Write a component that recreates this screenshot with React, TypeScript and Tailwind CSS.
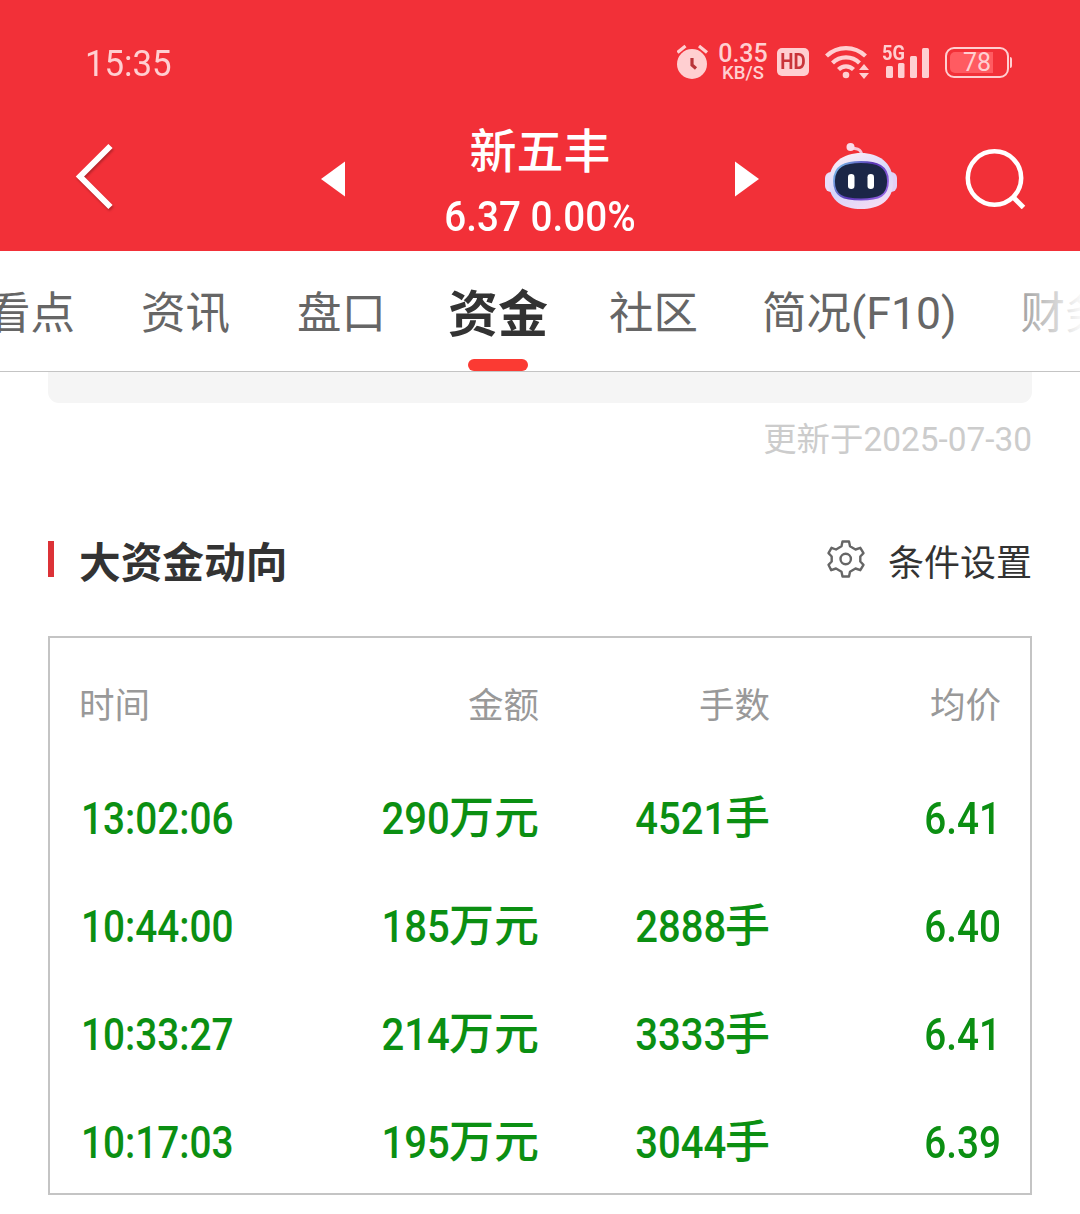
import React from 'react';
import clsx from 'clsx';

const trades = [
  { time: '13:02:06', amount: '290', lots: '4521', price: '6.41' },
  { time: '10:44:00', amount: '185', lots: '2888', price: '6.40' },
  { time: '10:33:27', amount: '214', lots: '3333', price: '6.41' },
  { time: '10:17:03', amount: '195', lots: '3044', price: '6.39' },
];

const tabs = ['看点', '资讯', '盘口', '资金', '社区', '简况(F10)', '财务'];

function StatusIcons() {
  return (
    <div className="flex items-center pb-[2px] text-[#ffcfd1]">
      <svg width="32" height="36" viewBox="0 0 32 36" fill="none">
        <circle cx="15" cy="20" r="15" fill="currentColor" />
        <path d="M0.500 8.500l8-6.500M30 8.500l-8-6.500" stroke="currentColor" strokeWidth="3.200" />
        <path d="M15 14v7l4 3.500" stroke="#b8343a" strokeWidth="3.200" />
      </svg>
      <div className="ml-[9px] flex w-[50px] flex-col items-center pt-[3px] font-medium">
        <span className="text-[25px] leading-[19px]">0.35</span>
        <span className="text-[18.500px] leading-[20px]">KB/S</span>
      </div>
      <div className="ml-[9px] flex h-[28px] w-[32px] items-center justify-center rounded-[5px] bg-[#ffcfd1]">
        <span className="scale-x-[0.85] text-[22px] leading-none font-bold text-[#c9343a]">HD</span>
      </div>
      <svg className="ml-[16px]" width="46" height="36" viewBox="0 0 46 36" fill="none">
        <g stroke="currentColor" strokeWidth="4.200">
          <path d="M1.500 12a28 28 0 0 1 39 0" />
          <path d="M7.500 19a19 19 0 0 1 27 0" />
          <path d="M13.500 25.500a10.500 10.500 0 0 1 15 0" />
        </g>
        <circle cx="21" cy="31" r="3.300" fill="currentColor" />
        <path d="M34 26l5-6 5 6zM34 29l5 6 5-6z" fill="currentColor" />
      </svg>
      <div className="relative ml-[11px] h-[36px] w-[47px]">
        <span className="absolute -top-[1px] left-0 origin-left scale-x-[0.87] text-[21px] leading-none font-bold">5G</span>
        <svg width="47" height="36" viewBox="0 0 47 36" fill="currentColor">
          <rect x="4" y="22" width="7" height="12" rx="1.500" />
          <rect x="16" y="19" width="6.500" height="15" rx="1.500" />
          <rect x="28" y="12" width="7" height="22" rx="1.500" />
          <rect x="40" y="4" width="7" height="30" rx="1.500" />
        </svg>
      </div>
      <div className="ml-[16px] flex h-[31px] w-[64px] rounded-[9px] border-2 border-[#ffcfd1] p-[3px]">
        <div className="flex h-full w-[43px] items-center justify-end rounded-l-[5px] bg-[#ff5b61] pr-[2px] text-[25px] leading-none">
          78
        </div>
      </div>
      <div className="ml-[1px] h-[11px] w-[2px] rounded-r bg-[#ffcfd1]" />
    </div>
  );
}

function Robot() {
  return (
    <svg width="74" height="68" viewBox="0 0 74 68" fill="none">
      <defs>
        <linearGradient id="shell" x1="20" y1="10" x2="46" y2="68" gradientUnits="userSpaceOnUse">
          <stop stopColor="#fdeef6" />
          <stop offset="0.55" stopColor="#d5d6fb" />
          <stop offset="1" stopColor="#f5dcf3" />
        </linearGradient>
        <linearGradient id="rim" x1="12" y1="20" x2="62" y2="56" gradientUnits="userSpaceOnUse">
          <stop stopColor="#79c5ee" />
          <stop offset="0.5" stopColor="#5a35b5" />
          <stop offset="1" stopColor="#9a6ae8" />
        </linearGradient>
      </defs>
      <path d="M27 5.500c5 2 10 0 11 8.500" stroke="#f8c6d8" strokeWidth="3" />
      <circle cx="26.500" cy="5" r="4" fill="#f9dcea" />
      <rect x="1" y="30" width="12" height="20" rx="6" fill="#e9defa" />
      <rect x="61" y="30" width="12" height="20" rx="6" fill="#e3cff5" />
      <path d="M37 11C54 11 69 20 69 40S54 67 37 67 5 60 5 40 20 11 37 11z" fill="url(#shell)" />
      <path
        d="M37 20c16 0 27 4 27 19s-9 18.500-27 18.500S10 54 10 39s11-19 27-19z"
        fill="#1b2647"
        stroke="url(#rim)"
        strokeWidth="1.800"
      />
      <rect x="24" y="32" width="6.500" height="15" rx="3.200" fill="#fff" />
      <rect x="43.500" y="32" width="6.500" height="15" rx="3.200" fill="#fff" />
    </svg>
  );
}

function Header() {
  return (
    <header className="h-[251px] bg-[#f23038]">
      <div className="flex h-[126px] items-center justify-between pr-[68px] pl-[85px]">
        <span className="origin-left scale-x-[0.94] pt-[2px] text-[37px] text-[#ffcfd1]">15:35</span>
        <StatusIcons />
      </div>
      <div className="flex h-[125px] text-white">
        <svg className="mt-[17px] ml-[74px] drop-shadow-[1px_2px_1px_rgba(0,0,0,0.25)]" width="42" height="68" viewBox="0 0 42 68" fill="none">
          <path d="M36.500 3L6 33.500 36.500 64" stroke="currentColor" strokeWidth="6" />
        </svg>
        <svg className="mt-[34px] ml-[205px]" width="24" height="38" viewBox="0 0 24 38">
          <path d="M24 1.500v35L0 19z" fill="currentColor" />
        </svg>
        <div className="flex w-[390px] flex-col items-center">
          <h1 className="mt-[1px] text-[47px] leading-[50px] font-medium">新五丰</h1>
          <div className="mt-[18px] scale-x-[0.92] text-[42px] leading-[44px] font-medium whitespace-nowrap">
            6.37 0.00%
          </div>
        </div>
        <svg className="mt-[34px]" width="24" height="38" viewBox="0 0 24 38">
          <path d="M0 1.500v35L24 19z" fill="currentColor" />
        </svg>
        <div className="mt-[16px] ml-[65px]">
          <Robot />
        </div>
        <svg className="mt-[21px] ml-[67px]" width="62" height="62" viewBox="0 0 62 62" fill="none" stroke="currentColor">
          <circle cx="29.500" cy="31" r="26.700" strokeWidth="4.500" />
          <path d="M47.500 49.500L58.500 60.500" strokeWidth="5" />
        </svg>
      </div>
    </header>
  );
}

function Tabs() {
  return (
    <nav className="relative flex h-[121px] gap-[66px] overflow-hidden border-b border-[#c4c4c4] text-[44.500px] text-[#666]">
      {tabs.map((tab, i) => (
        <div
          key={tab}
          className={clsx(
            'relative flex h-[120px] shrink-0 items-center pt-[6px] whitespace-nowrap',
            i === 0 && '-ml-[14px]',
            i === 2 && 'ml-[1px]',
            i === 3 && '-mx-[4px] pt-[8px] text-[50px] font-bold text-[#333]',
            i === 4 && '-ml-[1px]',
            i === 5 && '-mr-[2px] -ml-[2px]',
          )}
        >
          {tab}
          {i === 3 && (
            <span className="absolute bottom-0 left-1/2 h-[12px] w-[60px] -translate-x-1/2 rounded-full bg-[#fb3a33]" />
          )}
        </div>
      ))}
      <div className="absolute top-0 right-0 h-full w-[90px] bg-gradient-to-r from-white/10 to-white/95" />
    </nav>
  );
}

function GearIcon() {
  return (
    <svg width="38" height="38" viewBox="0 0 38 38" fill="none" stroke="#666" strokeWidth="2.400" strokeLinejoin="round">
      <path d="M15.500 1.500h6.500l1 4.800 5.500 3.200 4.800-1.700 3.200 5.400-3.200 3.300v5l3.200 3.300-3.200 5.400-4.800-1.700-5.500 3.200-1 4.800h-6.500l-1-4.800-5.500-3.200-4.800 1.700L1.500 24.800l3.200-3.300v-5L1.500 13.200l3-5.400L9 9.500l5.500-3.200z" />
      <circle cx="18.700" cy="19" r="5.200" />
    </svg>
  );
}

function TradeTable() {
  return (
    <div className="mx-12 mt-[45px] h-[559px] border-2 border-[#c4c4c4] px-[29px]">
      <div className="flex h-[127px] items-center pt-[10px] text-[35.500px] text-[#999]">
        <span className="w-[200px]">时间</span>
        <span className="w-[260px] text-right">金额</span>
        <span className="w-[231px] text-right">手数</span>
        <span className="w-[231px] text-right">均价</span>
      </div>
      {trades.map((t) => (
        <div key={t.time} className="flex h-[108px] items-center text-[45px] font-medium text-[#0b8f12]">
          <span className="w-[200px] origin-left translate-x-[2px] scale-x-[0.86]">{t.time}</span>
          <span className="w-[260px] text-right">
            <span className="inline-block origin-right translate-x-[1px] scale-x-[0.89]">{t.amount}</span>万元
          </span>
          <span className="w-[231px] text-right">
            <span className="inline-block origin-right translate-x-[1px] scale-x-[0.89]">{t.lots}</span>手
          </span>
          <span className="w-[231px] origin-right scale-x-[0.86] text-right">{t.price}</span>
        </div>
      ))}
    </div>
  );
}

export default function App() {
  return (
    <div className="h-[1214px] w-[1080px] overflow-hidden bg-white font-['Roboto','Noto_Sans_CJK_SC',sans-serif]">
      <Header />
      <Tabs />
      <div className="mx-12 h-[31px] rounded-b-[11px] bg-[#f5f5f5]" />
      <div className="mx-12 mt-[12px] text-right text-[33.400px] leading-[50px] text-[#ccc]">更新于2025-07-30</div>
      <div className="mx-12 mt-[66px] flex h-[60px] items-center">
        <span className="mb-1 h-[36px] w-[6px] bg-[#dc3237]" />
        <h2 className="ml-[25px] pt-[6px] text-[41.700px] leading-[60px] font-bold text-[#333]">大资金动向</h2>
        <div className="ml-auto flex items-center">
          <div className="mb-1">
            <GearIcon />
          </div>
          <span className="ml-[23px] pt-[6px] text-[36px] leading-[60px] text-[#333]">条件设置</span>
        </div>
      </div>
      <TradeTable />
    </div>
  );
}
